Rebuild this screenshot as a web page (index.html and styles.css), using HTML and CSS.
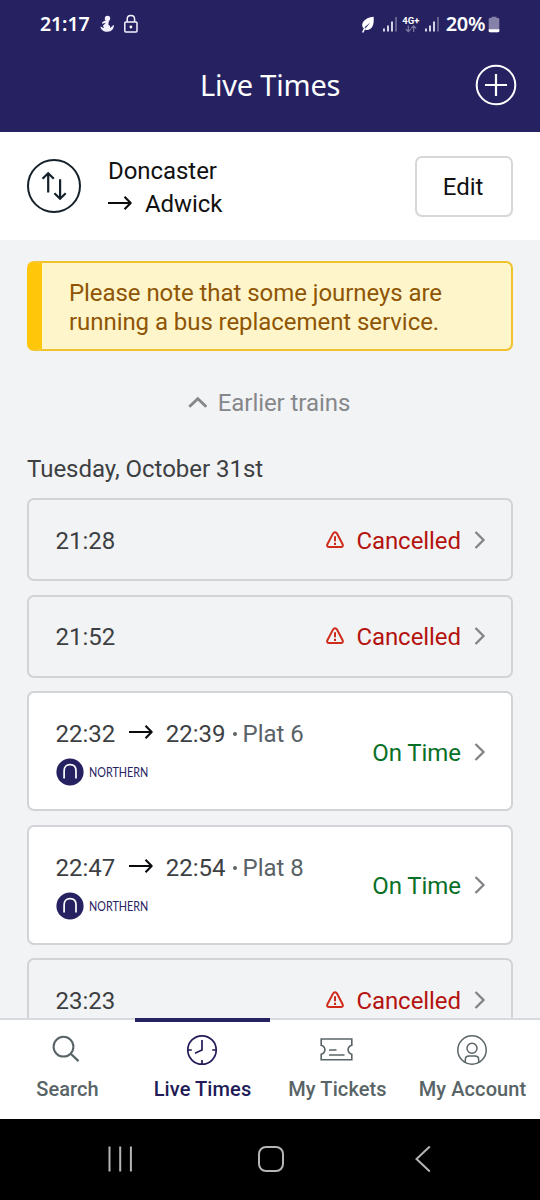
FILE: index.html
```html
<!DOCTYPE html>
<html lang="en">
<head>
<meta charset="utf-8">
<title>Live Times</title>
<link rel="stylesheet" href="styles.css">
</head>
<body>
<svg class="defs" width="0" height="0">
  <symbol id="warn" viewBox="0 0 20 20"><path d="M10 2.200c.9 0 1.500.5 2 1.400l5.600 10.600c.8 1.700 0 2.900-1.800 2.900H4.200c-1.800 0-2.600-1.200-1.800-2.900L8 3.600c.5-.9 1.100-1.400 2-1.400Z" fill="none" stroke="#d02a1a" stroke-width="2"/><path d="M10 6.300v5M10 12.700v2.200" stroke="#c8200f" stroke-width="1.900"/></symbol>
  <symbol id="chev" viewBox="0 0 12 20"><path d="M1.500 2 9.500 10l-8 8" fill="none" stroke="#818386" stroke-width="2.300"/></symbol>
  <symbol id="arrow" viewBox="0 0 26 16"><path d="M0 8h22.500M16.500 1.800 22.700 8l-6.200 6.200" fill="none" stroke="#0b0c0d" stroke-width="2.100" stroke-linejoin="round"/></symbol>
  <symbol id="north" viewBox="0 0 28 28"><circle cx="14" cy="14" r="13.600" fill="#262262"/><path d="M8.100 20.500V13C8.100 9 10.300 6.700 14 6.700s6 2.300 6 6.300v7.500" fill="none" stroke="#fff" stroke-width="1.700"/></symbol>
  <symbol id="signal" viewBox="0 0 16 16"><path d="M2 12.500V15.500M6 9.500V15.500M10 5.500V15.500" stroke="#f2f0fa" stroke-width="1.700"/><path d="M14 1v14.500" stroke="#77729d" stroke-width="1.600"/></symbol>
</svg>
<div class="screen">
  <header class="header">
    <div class="status">
      <span class="clock">21:17</span>
      <svg class="anchor" width="16" height="18" viewBox="0 0 16 18"><circle cx="8.500" cy="3.500" r="2.700" fill="#f5f2ff"/><path d="M5.500 5.700 10 5.400l-.7 4 1.700 1.500.2 2.100 3.600-3.200c.4 4-2.300 7-6.300 7C4.500 16.800 1.700 14.500 1.300 11.500l3.800 1.700-1.200-2.400 3-3-3.600 1-.3-1.300Z" fill="#f5f2ff"/></svg>
      <svg class="lock" width="16" height="20" viewBox="0 0 16 20"><rect x="1.800" y="8" width="12.200" height="10" rx="1" fill="none" stroke="#f5f2ff" stroke-width="1.500"/><path d="M4.200 8V5.200C4.200 3 5.600 1.600 7.900 1.600s3.700 1.400 3.700 3.600V8" fill="none" stroke="#f5f2ff" stroke-width="1.500"/><circle cx="7.900" cy="13" r="1.400" fill="#fff"/></svg>
      <span class="grow"></span>
      <svg class="leaf" width="14" height="17" viewBox="0 0 14 17"><path d="M12.600.8c.8 7.700-1.200 13-7 13.200-1 0-1.600-.2-2-.5L9.300 6.600 2.300 12.300C-.9 8 3 1.800 12.600.8Z" fill="#fff"/><path d="M4 11.500 1.700 16.500" stroke="#fff" stroke-width="1.600"/></svg>
      <svg class="sig1" width="16" height="16"><use href="#signal"/></svg>
      <span class="network"><span class="gen">4G+</span><svg width="12" height="8" viewBox="0 0 12 8"><path d="M3.300.5v6M.8 4.200l2.500 2.500 2.500-2.500M8.700 7V1M6.200 3.300 8.700.8l2.500 2.500" fill="none" stroke="#7f7aa5" stroke-width="1.200"/></svg></span>
      <svg class="sig2" width="16" height="16"><use href="#signal"/></svg>
      <span class="percent">20%</span>
      <svg class="battery" width="12" height="17" viewBox="0 0 12 17"><path d="M3.500 2V.8h5V2H10c.8 0 1.300.5 1.300 1.300V15c0 .7-.5 1.200-1.300 1.200H2c-.8 0-1.300-.5-1.300-1.200V3.300C.7 2.500 1.200 2 2 2Z" fill="#8581a9"/><path d="M.7 13.300h10.600V15c0 .7-.5 1.200-1.300 1.200H2c-.8 0-1.300-.5-1.300-1.200Z" fill="#fff"/></svg>
    </div>
    <div class="titlebar">
      <h1>Live Times</h1>
      <svg class="plus" width="42" height="42" viewBox="0 0 42 42"><circle cx="21" cy="21" r="19.300" fill="none" stroke="#fff" stroke-width="2"/><path d="M21 10v22M10 21h22" stroke="#fff" stroke-width="2.200"/></svg>
    </div>
  </header>
  <section class="route">
    <svg width="54" height="54" viewBox="0 0 54 54"><circle cx="27" cy="27" r="26" fill="none" stroke="#14212a" stroke-width="2"/><path d="M21.200 33.500V15M15.500 19.800l5.700-5.600 5.600 5.600M33.100 20.300V39M27.400 34.200l5.700 5.500 5.600-5.500" fill="none" stroke="#14212a" stroke-width="2.200"/></svg>
    <div class="places"><div><span class="from">Doncaster</span></div><div class="dest"><svg width="26" height="16"><use href="#arrow"/></svg><span class="to">Adwick</span></div></div>
    <button class="edit"><span>Edit</span></button>
  </section>
  <main class="content">
    <div class="notice"><span class="n1">Please note that some journeys are</span><br><span class="n2">running a bus replacement service.</span></div>
    <div class="earlier"><svg width="20" height="14" viewBox="0 0 20 14"><path d="m1.300 10.700 8.500-8 8.500 8" fill="none" stroke="#85878a" stroke-width="2.900"/></svg><span>Earlier trains</span></div>
    <h2><span>Tuesday, October 31st</span></h2>
    <div class="list">
      <article class="card cancelled"><span class="time">21:28</span><div class="state"><svg class="warn" width="20" height="20"><use href="#warn"/></svg><span>Cancelled</span><svg class="chev" width="12" height="20"><use href="#chev"/></svg></div></article>
      <article class="card cancelled"><span class="time">21:52</span><div class="state"><svg class="warn" width="20" height="20"><use href="#warn"/></svg><span>Cancelled</span><svg class="chev" width="12" height="20"><use href="#chev"/></svg></div></article>
      <article class="card running"><div><div class="times"><span class="time">22:32</span><svg width="26" height="16"><use href="#arrow"/></svg><span class="time">22:39</span><i></i><span class="plat">Plat 6</span></div><div class="operator"><svg width="28" height="28"><use href="#north"/></svg><span>NORTHERN</span></div></div><div class="state ok"><span>On Time</span><svg class="chev" width="12" height="20"><use href="#chev"/></svg></div></article>
      <article class="card running"><div><div class="times"><span class="time">22:47</span><svg width="26" height="16"><use href="#arrow"/></svg><span class="time">22:54</span><i></i><span class="plat">Plat 8</span></div><div class="operator"><svg width="28" height="28"><use href="#north"/></svg><span>NORTHERN</span></div></div><div class="state ok"><span>On Time</span><svg class="chev" width="12" height="20"><use href="#chev"/></svg></div></article>
      <article class="card cancelled"><span class="time">23:23</span><div class="state"><svg class="warn" width="20" height="20"><use href="#warn"/></svg><span>Cancelled</span><svg class="chev" width="12" height="20"><use href="#chev"/></svg></div></article>
    </div>
  </main>
  <nav class="tabs">
    <a class="tab"><svg width="32" height="32" viewBox="0 0 32 32"><circle cx="12.500" cy="12.700" r="9.900" fill="none" stroke="#596466" stroke-width="2"/><path d="m19.500 19.500 8 7.700" stroke="#596466" stroke-width="2.300"/></svg><span>Search</span></a>
    <a class="tab active"><svg width="32" height="32" viewBox="0 0 32 32"><g fill="none" stroke="#211b57" stroke-width="1.700"><circle cx="16" cy="16" r="14.200"/><path d="M16 6v10l-7 3.200M1.800 16h4M26.200 16h4M16 26v4"/></g></svg><span>Live Times</span></a>
    <a class="tab"><svg width="34" height="32" viewBox="0 0 34 32"><g fill="none" stroke="#596466" stroke-width="1.600"><path d="M1.200 5h30.600v6.300c-2.500.8-3.700 2.400-3.700 4.500s1.200 3.700 3.700 4.500v5.500H1.200v-5.500c2.500-.8 3.700-2.400 3.700-4.500s-1.200-3.700-3.700-4.500Z"/><path d="M9 16H16.500M9 21H24.500"/></g></svg><span>My Tickets</span></a>
    <a class="tab"><svg width="32" height="32" viewBox="0 0 32 32"><g fill="none" stroke="#596466" stroke-width="1.500"><circle cx="16" cy="16" r="14.200"/><circle cx="16" cy="14.300" r="5"/><path d="M9.300 28.500v-2.700c0-2.200 1.500-3.700 3.700-3.700h6c2.200 0 3.700 1.500 3.700 3.700v2.700"/></g></svg><span>My Account</span></a>
  </nav>
  <footer class="system">
    <svg width="26" height="28" viewBox="0 0 26 28"><path d="M2.500 1.500v25M13.200 1.500v25M23.900 1.500v25" stroke="#b5b5b5" stroke-width="2"/></svg>
    <svg class="home" width="28" height="28" viewBox="0 0 28 28"><rect x="2" y="2" width="24" height="24" rx="7" fill="none" stroke="#b5b5b5" stroke-width="2"/></svg>
    <svg width="18" height="28" viewBox="0 0 18 28"><path d="M15.800 1.500 2.500 14l13.300 12.500" fill="none" stroke="#b5b5b5" stroke-width="2"/></svg>
  </footer>
</div>
</body>
</html>
```

FILE: styles.css
```css
* { box-sizing: border-box; }
body { margin: 0; font-family: Roboto, sans-serif; font-size: 24px; line-height: 28px; letter-spacing: -.06px; color: #3d4043; }
svg { display: block; flex: none; overflow: visible; }
.defs { display: none; }
.screen { width: 540px; height: 1200px; display: flex; flex-direction: column; overflow: hidden; background: #f2f3f5; }
.header { height: 132px; flex: none; background: #262262; color: #fff; }
.status { height: 48px; display: flex; align-items: center; padding: 0 40px 0 40px; font-family: "Noto Sans", sans-serif; font-weight: 600; font-size: 19.500px; white-space: nowrap; }
.clock { letter-spacing: -.1px; }
.anchor { margin-left: 9px; }
.lock { margin-left: 8px; margin-top: -1px; }
.grow { flex: 1; }
.sig1 { margin-left: 7px; }
.network { width: 18px; margin-left: 4px; display: flex; flex-direction: column; align-items: center; }
.gen { font-family: Roboto, sans-serif; font-weight: 700; font-size: 9.500px; line-height: 9px; }
.sig2 { margin-left: 4px; }
.percent { margin-left: 6px; font-size: 20px; letter-spacing: -.4px; }
.battery { margin-left: 3px; }
.titlebar { height: 84px; display: flex; align-items: flex-start; justify-content: space-between; padding: 16px 23px 0 200px; }
h1 { margin: 4px 0 0; font: 400 29px/34px "Noto Sans", sans-serif; letter-spacing: -.2px; white-space: nowrap; }
.route { height: 108px; flex: none; background: #fff; display: flex; align-items: center; padding: 0 27px; color: #111; }
.places { flex: 1; margin-left: 27px; line-height: 33px; padding-top: 4px; }
.dest { display: flex; align-items: center; }
.dest svg { margin-top: -4px; }
.to { margin-left: 11px; }
.edit { width: 98px; height: 61px; border: 2px solid #d5d7d9; border-radius: 7px; background: #fff; font: inherit; letter-spacing: inherit; color: #111; padding: 1px 2px 0 0; }
.content { flex: 1; min-height: 0; overflow: hidden; padding: 21px 27px 0; }
.notice { height: 90px; border: 2px solid #f0c22e; border-left: 15px solid #ffc60a; border-radius: 7px; background: #fef6ca; color: #8f5505; padding: 16px 0 0 27px; line-height: 28.500px; white-space: nowrap; }
.earlier { display: flex; align-items: center; justify-content: center; gap: 10px; margin: 38px 2px 0 0; color: #85878a; }
h2 { margin: 37px 0 0; font-size: 24px; font-weight: 400; line-height: 30px; letter-spacing: -.02px; }
.list { display: flex; flex-direction: column; gap: 13.600px; margin-top: 14px; letter-spacing: 0; }
.card { flex: none; display: flex; align-items: center; justify-content: space-between; border: 2px solid #d1d3d6; border-radius: 7px; padding: 2px 25px 0 26.500px; }
.cancelled { height: 83px; }
.running { height: 120px; background: #fff; padding-top: 3px; }
.state { display: flex; align-items: center; color: #b51310; }
.state span { margin-left: 12px; letter-spacing: -.06px; }
.state .warn { margin: -2px -1px 0 0; }
.chev { margin: -2px 0 0 13px; }
.ok { color: #087026; }
.times { display: flex; align-items: center; padding-top: 1px; }
.times svg { margin: -3px 11px 0 13.500px; }
.times i { width: 4px; height: 4px; border-radius: 50%; background: #5e6366; margin: 0 6px 0 7px; }
.plat { color: #5a6267; }
.operator { display: flex; align-items: center; gap: 5.500px; margin: 10.500px 0 0; color: #262262; font: 400 13px/28px Lato, sans-serif; }
.operator span { transform: scaleX(.83); transform-origin: left; }
.tabs { height: 101px; flex: none; display: grid; grid-template-columns: repeat(4, 1fr); background: #fff; color: #596466; font-size: 20px; font-weight: 500; letter-spacing: .1px; }
.tab { display: flex; flex-direction: column; align-items: center; border-top: 2px solid #d9dadd; padding-top: 14px; white-space: nowrap; }
.tab svg { margin-right: 2px; }
.tab span { margin-top: 10px; line-height: 26px; }
.active { border-top: 4px solid #262262; padding-top: 12px; color: #211b57; }
.system { height: 81px; flex: none; background: #000; display: flex; align-items: center; justify-content: space-between; padding: 0 108px 2px 107px; }
.home { margin-right: 5px; }
```
